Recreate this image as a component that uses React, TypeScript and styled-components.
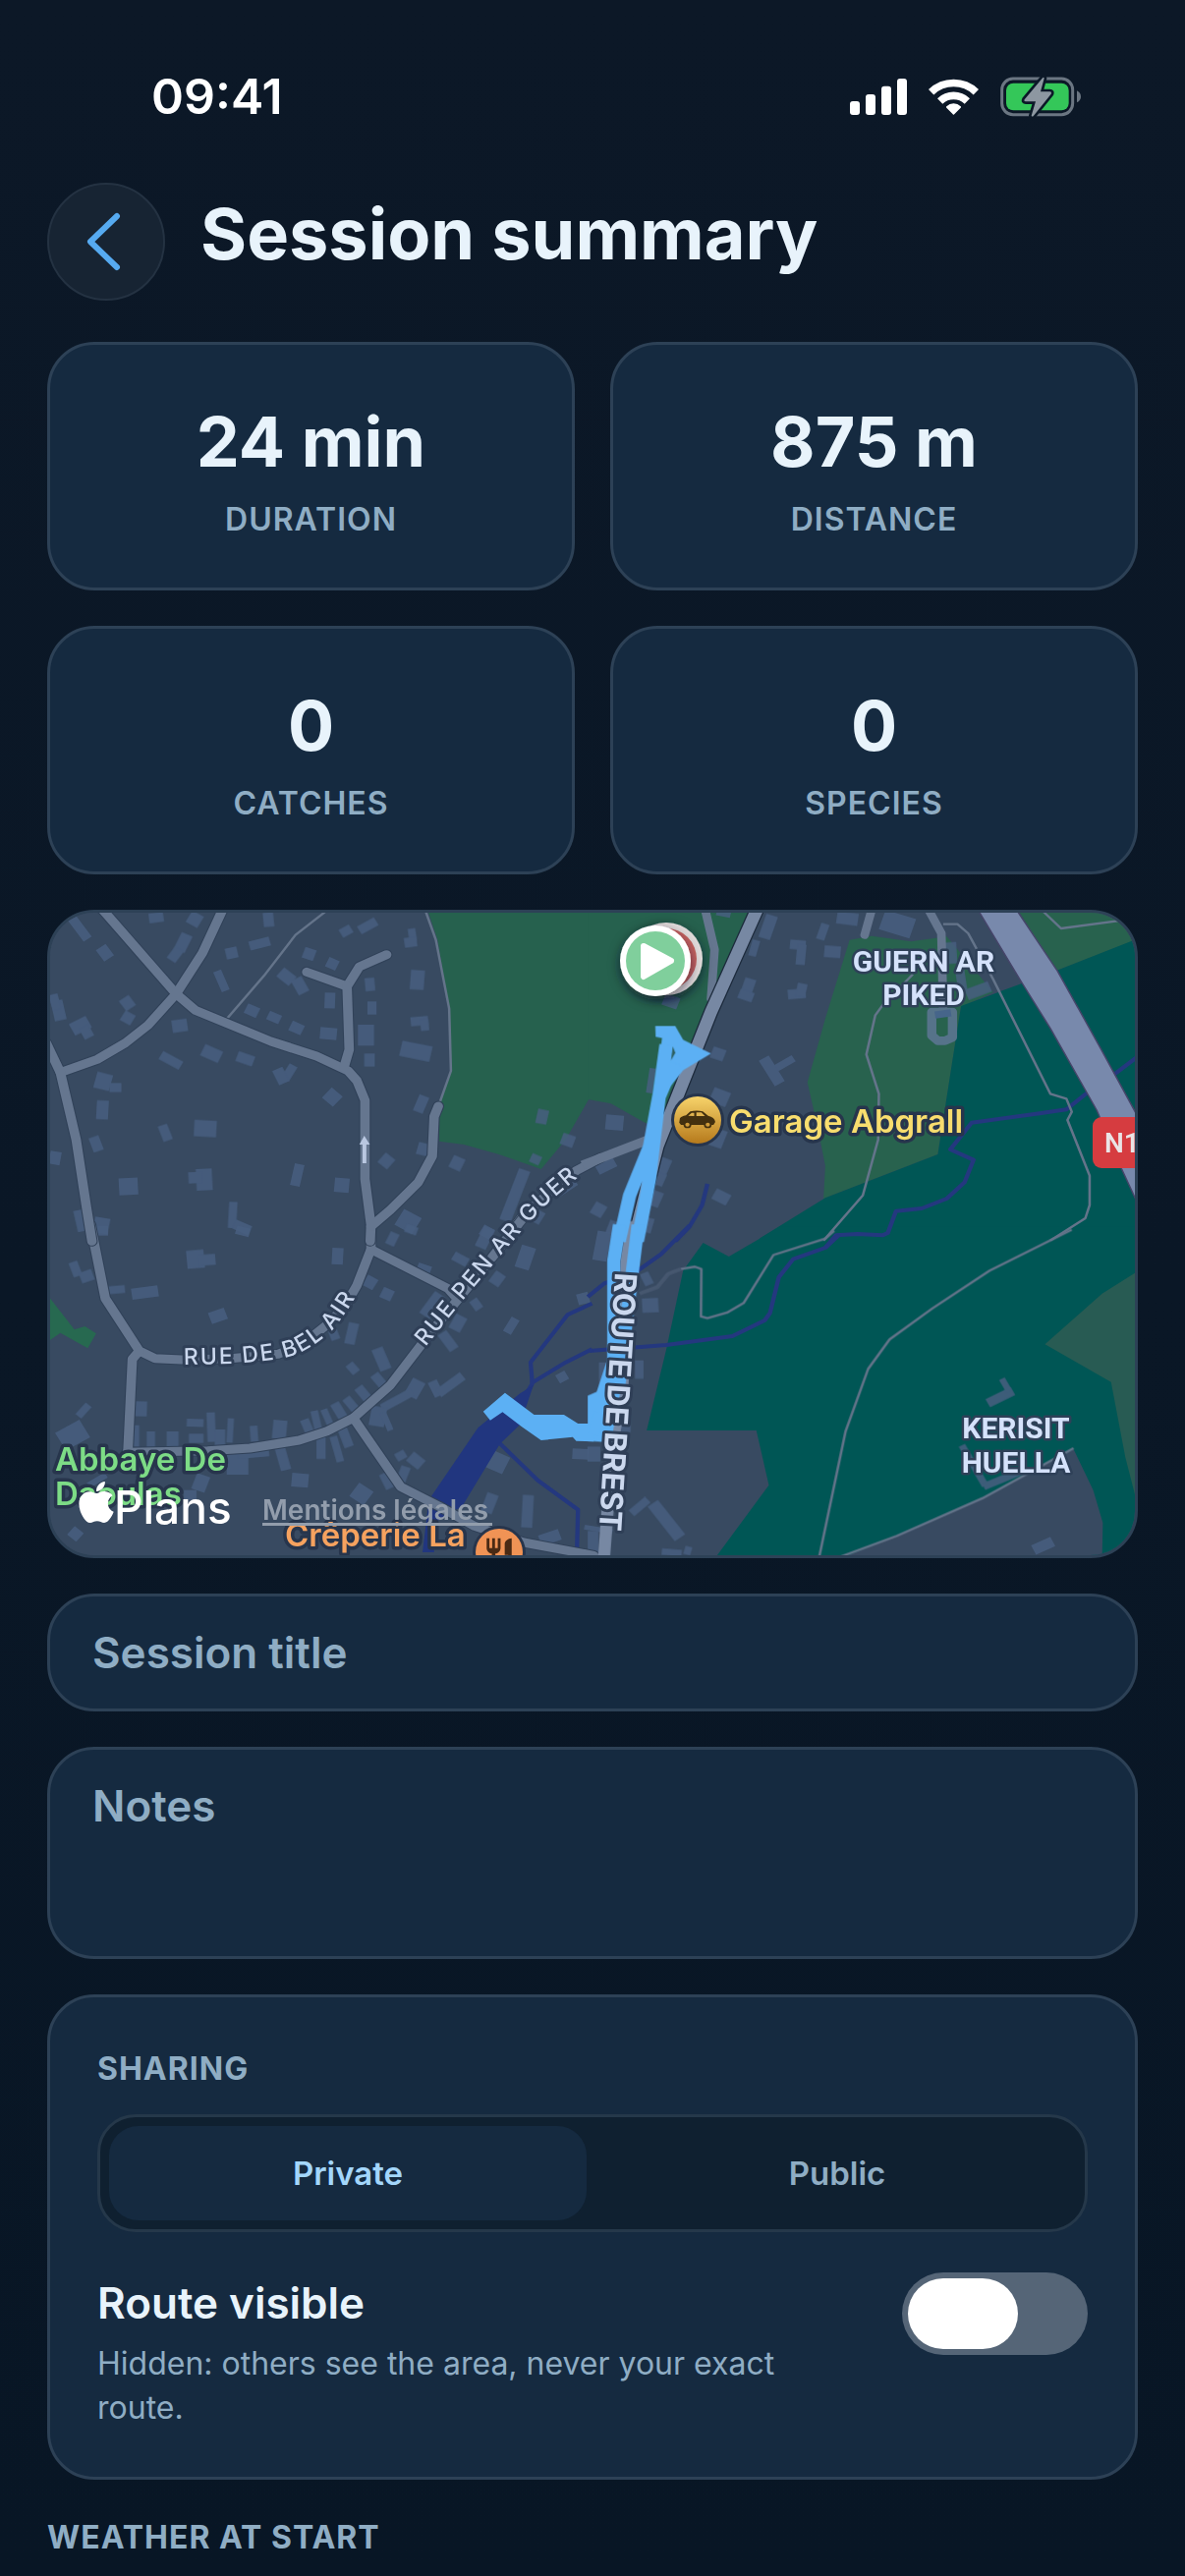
import React, { useState } from "react";
import styled, { createGlobalStyle } from "styled-components";
import { FaApple } from "react-icons/fa";
import { MdRestaurant } from "react-icons/md";

const GlobalStyle = createGlobalStyle`
  *, *::before, *::after { box-sizing: border-box; }
  body {
    margin: 0;
    background: #0a1726;
    color: #e8f3fb;
    font-family: Inter, "Noto Sans", sans-serif;
  }
  button, input, textarea { font: inherit; color: inherit; }
`;

const Screen = styled.main`
  min-height: 100vh;
  padding: 67px 48px 0;
  display: flex;
  flex-direction: column;
  background: linear-gradient(#0c1827, #081625);
`;

const StatusBar = styled.div`
  display: flex;
  align-items: center;
  justify-content: space-between;
  padding: 0 58px 0 106px;
  margin-bottom: 57px;
`;

const Clock = styled.time`
  font-size: 50px;
  line-height: 62px;
  font-weight: 600;
  color: #fff;
`;

const StatusIcons = styled.div`
  display: flex;
  align-items: center;
  gap: 22px;
`;

const Header = styled.header`
  display: flex;
  align-items: center;
  gap: 36px;
  margin-bottom: 42px;
`;

const BackButton = styled.button`
  width: 120px;
  height: 120px;
  flex: none;
  display: grid;
  place-items: center;
  padding: 0;
  border-radius: 50%;
  border: 2px solid #243242;
  background: #172433;
  color: #56aaf0;
`;

const Title = styled.h1`
  margin: 0;
  padding-bottom: 16px;
  font-size: 72px;
  line-height: 98px;
  font-weight: 700;
`;

const Content = styled.div`
  display: flex;
  flex-direction: column;
  gap: 36px;
`;

const Stats = styled.dl`
  margin: 0;
  display: grid;
  grid-template-columns: 1fr 1fr;
  gap: 36px;
`;

const Panel = styled.div`
  border: 3px solid #2d4156;
  border-radius: 48px;
  background: #152a40;
`;

const StatCard = styled(Panel)`
  display: flex;
  flex-direction: column-reverse;
  align-items: center;
  gap: 7px;
  padding: 50px 24px 47px;
`;

const StatValue = styled.dd`
  margin: 0;
  font-size: 70px;
  line-height: 98px;
  font-weight: 700;
`;

const StatLabel = styled.dt`
  font-size: 32px;
  line-height: 45px;
  font-weight: 600;
  letter-spacing: 1px;
  text-transform: uppercase;
  color: #8fadc4;
`;

const MapCard = styled(Panel)`
  overflow: hidden;
  background: #384a61;
  > svg { display: block; }
`;

const MapSvg = styled.svg`
  width: 100%;
  height: auto;
  font-family: Inter, sans-serif;
`;

const Poi = styled.text<{ $color: string }>`
  font-size: 33px;
  font-weight: 600;
  fill: ${(p) => p.$color};
  stroke: #27354c;
  stroke-width: 7px;
  stroke-linejoin: round;
  paint-order: stroke;
`;

const Place = styled.text`
  font-family: Roboto, sans-serif;
  font-size: 30px;
  font-weight: 700;
  text-anchor: middle;
  fill: #d5e2fb;
  stroke: #2e4058;
  stroke-width: 5px;
  stroke-linejoin: round;
  paint-order: stroke;
`;

const Street = styled.text<{ $major?: boolean }>`
  font-size: ${(p) => (p.$major ? 31 : 23)}px;
  font-weight: ${(p) => (p.$major ? 700 : 500)};
  letter-spacing: ${(p) => (p.$major ? 0 : 2)}px;
  fill: #cbd8ee;
  stroke: #2f3f57;
  stroke-width: 6px;
  stroke-linejoin: round;
  paint-order: stroke;
`;

const Brand = styled.text`
  font-size: 46px;
  font-weight: 500;
  fill: #fff;
`;

const Legal = styled.text`
  font-size: 28px;
  font-weight: 600;
  fill: #929dac;
`;

const Field = styled.input`
  width: 100%;
  height: 120px;
  padding: 0 43px;
  border: 3px solid #2d4156;
  border-radius: 48px;
  background: #152a40;
  font-size: 44px;
  line-height: 54px;
  font-weight: 600;
  outline: none;
  &::placeholder { color: #8fadc4; opacity: 1; }
`;

const Area = styled(Field)`
  display: block;
  height: 216px;
  padding: 30px 43px;
  resize: none;
`;

const Sharing = styled(Panel).attrs({ as: "section" })`
  padding: 50px 48px 48px;
`;

const SectionTitle = styled.h2`
  margin: 0;
  font-size: 32px;
  line-height: 45px;
  font-weight: 700;
  letter-spacing: 1px;
  text-transform: uppercase;
  color: #8fadc4;
`;

const Segmented = styled.div`
  display: grid;
  grid-template-columns: 1fr 1fr;
  gap: 12px;
  margin: 24px 0 36px;
  padding: 9px;
  border: 3px solid #25384a;
  border-radius: 39px;
  background: #0f2030;
`;

const Segment = styled.button<{ $active: boolean }>`
  height: 96px;
  border: 0;
  border-radius: 30px;
  background: ${(p) => (p.$active ? "#152a40" : "transparent")};
  color: ${(p) => (p.$active ? "#a3d6fb" : "#8fadc4")};
  font-size: 33px;
  font-weight: 600;
`;

const RouteRow = styled.div`
  display: flex;
  align-items: flex-start;
  gap: 36px;
`;

const RouteText = styled.div`
  flex: 1;
  min-width: 0;
  padding-top: 6px;
`;

const RouteLabel = styled.label`
  display: block;
  margin-bottom: 8px;
  font-size: 44px;
  line-height: 61px;
  font-weight: 600;
`;

const RouteHint = styled.p`
  margin: 0;
  max-width: 740px;
  font-size: 32px;
  line-height: 45px;
  color: #8fadc4;
`;

const Switch = styled.input`
  appearance: none;
  flex: none;
  width: 189px;
  height: 84px;
  margin: 5px 0 0;
  padding: 6px;
  border-radius: 42px;
  background: #556577;
  &::before {
    content: "";
    display: block;
    width: 112px;
    height: 72px;
    border-radius: 36px;
    background: #fff;
  }
  &:checked { background: #56aaf0; }
  &:checked::before { margin-left: auto; }
`;

const NW = "translate(-8 -6) scale(.35714 .33333)";
const NE = "translate(552 -6) scale(.36352 .33333)";
const SW = "translate(-8 324) scale(.35714 .33333)";
const SE = "translate(552 324) scale(.36352 .33333)";

/* Buildings: centre x, centre y, width, height, rotation. */
type B = [number, number, number, number, number];
const nwBuildings: B[] = [
  [115, 75, 28, 80, -35], [333, 42, 42, 30, -8], [443, 47, 38, 40, 30], [653, 48, 30, 44, -5],
  [187, 149, 34, 42, -35], [410, 118, 34, 55, 25], [387, 155, 30, 42, 35], [548, 150, 34, 34, -12],
  [628, 121, 60, 28, -15], [874, 83, 28, 34, 60], [936, 67, 56, 28, -30], [1063, 95, 22, 40, -8],
  [1058, 117, 36, 30, -8], [769, 153, 34, 34, 20], [835, 183, 32, 32, 25], [1077, 232, 40, 60, 4],
  [942, 246, 28, 40, -5], [948, 318, 26, 40, 0], [828, 295, 30, 48, 2], [704, 222, 36, 46, -50],
  [743, 250, 34, 50, -28], [519, 235, 24, 66, -22], [55, 325, 34, 62, -12], [45, 300, 26, 50, -15],
  [251, 303, 34, 38, -35], [252, 348, 34, 34, 30], [117, 372, 54, 40, -28], [135, 392, 30, 36, -28],
  [400, 372, 44, 38, -8], [606, 326, 38, 32, 25], [669, 347, 38, 28, 25], [733, 379, 38, 32, 25],
  [824, 396, 48, 36, 5], [931, 401, 46, 64, 0], [941, 477, 30, 40, 0], [1083, 358, 50, 28, -5],
  [1098, 370, 24, 34, -5], [1073, 450, 88, 48, 12], [375, 478, 66, 28, 30], [491, 457, 56, 38, 25],
  [587, 473, 50, 32, 20], [712, 515, 26, 50, 30], [688, 526, 32, 48, -25], [835, 590, 42, 42, 42],
  [182, 542, 46, 50, 15], [217, 561, 34, 28, 0], [180, 629, 34, 58, 3], [473, 686, 64, 50, 3],
  [359, 699, 28, 50, -20], [162, 733, 30, 46, -20], [45, 776, 32, 40, 10], [254, 863, 54, 52, -3],
  [470, 842, 46, 66, -3], [445, 836, 40, 34, -3], [735, 828, 28, 68, 12], [862, 859, 42, 44, 5],
  [989, 785, 36, 38, 40], [1088, 611, 30, 52, 22], [1094, 749, 34, 38, 15], [1190, 792, 36, 40, 25],
  [551, 950, 24, 80, 3], [578, 988, 50, 30, 25], [116, 968, 26, 66, -12], [177, 982, 44, 48, 10],
  [1051, 970, 58, 56, 30], [1433, 650, 32, 44, 12], [1506, 722, 38, 36, 20], [1414, 780, 30, 28, 25],
  [1355, 890, 34, 165, 20], [1420, 955, 30, 40, 30], [1502, 868, 66, 22, -35], [1275, 1002, 34, 34, 30],
];
const neBuildings: B[] = [
  [500, 70, 34, 74, 18], [461, 135, 22, 50, 15], [653, 85, 24, 50, 18], [722, 45, 60, 38, 8],
  [583, 125, 44, 30, 5], [592, 155, 26, 62, 5], [680, 146, 46, 36, 5], [862, 62, 90, 62, 18],
  [445, 250, 32, 45, 18], [438, 280, 42, 30, 20], [580, 275, 50, 30, -5], [593, 263, 28, 40, 12],
  [228, 298, 44, 36, 20], [360, 458, 38, 36, 20], [545, 488, 62, 22, -32], [510, 510, 32, 90, -30],
  [365, 590, 50, 46, 22], [70, 668, 50, 46, 5], [358, 715, 42, 56, 20], [205, 800, 38, 50, 22],
  [195, 840, 32, 40, 22], [183, 900, 36, 48, 22], [369, 895, 46, 36, 28], [160, 980, 34, 46, 15],
  [45, 798, 56, 36, -28], [25, 934, 36, 40, 30], [172, 540, 18, 76, 8], [1010, 150, 36, 66, -3],
  [1040, 230, 26, 70, -8], [1088, 265, 70, 34, -22], [375, 30, 40, 18, 12], [70, 990, 40, 40, 20],
];
const swBuildings: B[] = [
  [445, 95, 50, 56, -5], [478, 97, 48, 34, -5], [178, 8, 36, 30, 0], [580, 10, 40, 26, 15],
  [103, 125, 26, 46, -20], [135, 147, 38, 34, -20], [220, 188, 48, 24, -5], [301, 197, 76, 34, -8],
  [850, 86, 32, 50, 3], [1006, 33, 28, 40, 25], [943, 166, 34, 36, 30], [991, 202, 34, 34, 25],
  [509, 268, 48, 36, -20], [890, 322, 30, 66, 12], [840, 326, 26, 32, -20], [1060, 5, 36, 25, 20],
  [1200, 95, 46, 28, 30], [1305, 155, 34, 40, 35], [1245, 233, 26, 34, -35], [1270, 30, 34, 66, 25],
  [1385, 90, 42, 70, 18], [1193, 290, 36, 48, 28], [1165, 345, 30, 62, -35], [1120, 235, 36, 80, 35],
  [1345, 298, 26, 50, 30], [1095, 128, 40, 34, 20], [975, 400, 34, 70, -22], [893, 428, 26, 34, -40],
  [968, 465, 28, 46, -38], [925, 507, 28, 54, -38], [890, 540, 26, 54, -38], [855, 560, 28, 58, -30],
  [1070, 490, 40, 56, 28], [1020, 525, 100, 26, -30], [965, 575, 44, 60, 10], [990, 590, 18, 60, -22],
  [1490, 455, 30, 28, -30], [1130, 490, 28, 50, -25], [1172, 478, 88, 28, -38], [290, 552, 34, 46, 2],
  [126, 557, 22, 46, 40], [95, 632, 80, 62, -30], [444, 595, 48, 24, 2], [490, 608, 24, 90, -2],
  [544, 618, 18, 74, 3], [447, 642, 42, 28, 0], [380, 644, 34, 46, 0], [318, 645, 24, 48, 0],
  [272, 635, 26, 66, 0], [515, 640, 30, 50, 0], [612, 628, 22, 48, -4], [685, 615, 40, 56, 5],
  [765, 610, 26, 54, -22], [790, 590, 22, 66, -12], [822, 582, 20, 62, -22], [803, 665, 26, 80, 0],
  [848, 675, 22, 80, -15], [873, 640, 28, 60, -20], [565, 720, 62, 66, 0], [610, 690, 90, 22, -5],
  [693, 700, 30, 80, -15], [743, 770, 48, 42, 5], [460, 778, 40, 50, 20], [918, 812, 50, 50, 35],
  [1073, 710, 36, 44, -50], [1030, 695, 30, 26, -30], [1037, 752, 28, 50, 20], [990, 772, 26, 50, -25],
  [1306, 715, 54, 56, 25], [1391, 865, 32, 100, 3], [1283, 840, 34, 60, 20], [103, 934, 34, 34, 40],
  [1455, 945, 60, 34, -20], [1542, 690, 46, 32, 3], [430, 815, 36, 30, 0], [1550, 215, 34, 34, -15],
  [165, 770, 60, 18, -32],
];
const seBuildings: B[] = [
  [35, 55, 40, 90, 10], [160, 155, 26, 40, -25], [170, 236, 46, 44, -3], [139, 432, 24, 56, 0],
  [36, 455, 20, 90, 0], [12, 690, 36, 46, 0], [140, 850, 24, 62, 48], [215, 893, 36, 130, -36],
  [230, 990, 56, 20, 5], [275, 985, 20, 26, 15], [1150, 516, 80, 28, -28], [1165, 480, 18, 46, -28],
  [1270, 970, 60, 32, -26], [1075, 725, 20, 140, -28], [1158, 765, 120, 22, -24], [100, 595, 30, 56, 0],
  [10, 960, 30, 70, 0], [25, 920, 80, 15, 10],
];

const Buildings = ({ items }: { items: B[] }) => (
  <g fill="#485f80" opacity=".85">
    {items.map(([x, y, w, h, r], i) => (
      <rect key={i} x={x - w / 2} y={y - h / 2} width={w} height={h} transform={`rotate(${r} ${x} ${y})`} />
    ))}
  </g>
);

const Roads = ({ paths, width = 27 }: { paths: string[]; width?: number }) => (
  <g fill="none" strokeLinecap="round" strokeLinejoin="round">
    {paths.map((d) => <path key={"c" + d} d={d} stroke="#304158" strokeWidth={width + 6} />)}
    {paths.map((d) => <path key={d} d={d} stroke="#65768f" strokeWidth={width} />)}
  </g>
);

const SessionMap = () => (
  <MapSvg viewBox="3 3 1104 654" role="img" aria-label="Session route map">
    <defs>
      <path id="bel-air" d="M139 463 L188 462 Q232 459 250 454 Q272 445 290 428 Q304 412 322 380" />
      <path id="pen-ar-guer" d="M385 445 L426 394 L481 329 L508 300 L565 251" />
      <path id="brest" d="M578 369 L560 658" />
      <linearGradient id="gold" x1="0" y1="0" x2="0" y2="1">
        <stop offset="0" stopColor="#f7d36a" />
        <stop offset="1" stopColor="#b67a1c" />
      </linearGradient>
      <filter id="shade" x="-40%" y="-40%" width="180%" height="180%">
        <feDropShadow dx="0" dy="4" stdDeviation="6" floodColor="#0a1726" floodOpacity=".6" />
      </filter>
    </defs>
    <rect width="1110" height="660" fill="#384a61" />

    {/* parks and woodland */}
    <g transform={NW}>
      <path fill="#26614e" d="M1104 10L1135 110L1168 320L1173 510L1140 610V725L1210 735L1310 765L1430 810L1500 720L1580 570V10Z" />
    </g>
    <g transform={NE}>
      <path fill="#26614e" d="M-5 10H460L335 320L230 590L200 690L150 665L60 610L-5 597Z" />
      <path fill="#28624e" d="M728 110L790 98L900 115L1000 100L1130 270L1040 315L975 765L655 900L660 800L640 690L610 545L660 350Z" />
      <path fill="#28624e" d="M1195 10H1545V104L1305 205Z" />
      <path fill="#005655" d="M1040 312L1205 245L1305 205L1545 102V1022H475L660 898L975 765L1020 450Z" />
    </g>
    <g transform={SE}>
      <path fill="#005655" d="M535 -5H1545V1010H350L502 785L467 618H160L215 370L262 130L318 45L390 87Z" />
      <path fill="#285b53" d="M1540 128L1435 200L1275 355L1460 470L1500 700L1540 870Z" />
      <path fill="#384a61" d="M700 1010L860 940L1100 825L1355 675L1410 800L1437 900L1435 1010Z" />
    </g>
    <g transform={SW}>
      <path fill="#276950" d="M20 200L100 310L130 300L162 322L138 367L60 320L20 350Z" />
    </g>

    <g transform={NW}><Buildings items={nwBuildings} /></g>
    <g transform={NE}><Buildings items={neBuildings} /></g>
    <g transform={SW}><Buildings items={swBuildings} /></g>
    <g transform={SE}><Buildings items={seBuildings} /></g>

    {/* water */}
    <g fill="none" stroke="#24387f" strokeWidth="12" strokeLinejoin="round">
      <path transform={NE} d="M1540 462L1470 520L1390 580L1335 628L1260 640L1070 668L1010 750L1075 782L1050 850L1000 900L930 930L858 938L835 1005L820 1012L750 1008L690 1012L660 1050" />
      <path transform={NE} d="M330 855L315 920L280 985L240 1030" />
      <path transform={SE} d="M700 20L660 60L570 95L530 150L505 260L490 282L400 330L215 357L0 375" />
      <path transform={SE} d="M280 -8L200 80L135 130L40 170L-5 210" />
      <path transform={SW} d="M1575 230L1505 265L1400 410L1405 475L1380 520M1575 370L1500 410L1400 475M1310 655L1420 770L1535 860L1532 985" />
      <path transform={SW} fill="#21367f" stroke="none" d="M1408 480L1370 600L1312 660L1205 850L1125 900V990H1092L1110 830L1250 610L1370 505Z" />
    </g>

    {/* footpaths */}
    <g fill="none" stroke="#64748a" strokeWidth="7" strokeLinejoin="round">
      <path transform={NW} d="M820 20L730 95L640 220L535 350M1100 20L1130 110L1168 320L1173 510L1140 610" />
      <path transform={NE} d="M1265 18L1320 75L1540 43M990 62H1030L1060 90L1130 230L1290 580L1335 595L1350 635L1338 660L1400 830V920L1388 960L1290 1028M905 215L820 310L800 340L775 460L810 580L808 720L765 890L655 1028" />
      <path transform={SE} d="M1350 5L1120 130L960 245L840 340L780 430L717 620L642 1010M685 8L660 32L515 82L432 228L385 258L330 275L312 270L313 125L295 118L255 125M700 1005L860 940L1100 825L1355 672" />
      <path transform={SE} stroke="#46576f" strokeWidth="12" d="M255 125L220 140L190 180L140 200" />
    </g>

    {/* streets */}
    <g transform={SW}>
      <Roads paths={[
        "M146 -10L188 215L285 375L330 398L405 402L545 398L680 385L750 355L820 295L870 240L905 175L945 65V-30",
        "M285 375L265 400L252 690",
        "M1380 -40L1290 90L1100 340L1000 480L895 580L820 620L740 648L600 672L480 680L250 685",
        "M895 580L1030 790L1140 850L1240 910L1380 960L1580 1000",
        "M945 65L1165 185L1190 215",
      ]} />
    </g>
    <g transform={NW}>
      <Roads paths={[
        "M170 5L390 275L445 325L660 420L790 465L880 510L905 540L928 600V840L945 980L943 1030",
        "M528 5L465 150L390 275L310 370L245 425L165 475L60 515",
        "M20 425L60 515L105 720L135 930L150 1030",
        "M762 208L877 252L912 192L990 155",
        "M877 252L883 445L868 500",
        "M1137 618L1125 650L1120 770L1080 850L1000 935L945 985",
        "M1600 775L1530 815L1400 930L1290 1080",
      ]} />
      <path d="M926 708L912 735H921V792H932V735H942Z" fill="#b9c7e0" />
    </g>
    <g transform={NE} fill="none" strokeLinejoin="round">
      <path d="M322 10L350 140L340 290L352 315" stroke="#65768f" strokeWidth="24" />
      <path d="M792 10L770 95" stroke="#65768f" strokeWidth="24" strokeLinecap="round" />
      <path d="M945 10L985 90L990 320" stroke="#65768f" strokeWidth="24" />
      <path d="M958 330L1016 330V408L995 418L975 418L958 402Z" stroke="#56738a" strokeWidth="26" />
      <rect x="967" y="325" width="45" height="22" fill="#46658a" transform="rotate(-8 990 336)" />
      <path d="M-20 798L165 720" stroke="#65768f" strokeWidth="28" />
      <path d="M480 -10L340 330L190 740L130 1000" stroke="#1c2a3c" strokeWidth="42" />
      <path d="M480 -10L340 330L190 740L130 1000" stroke="#7788a3" strokeWidth="35" />
      <path fill="#7889ac" stroke="#46456a" strokeWidth="4" d="M1080 5L1187 5L1310 205L1430 440L1545 670V940L1490 810L1420 630L1290 380L1210 240Z" />
    </g>
    <path transform={SE} d="M122 -20L104 100L92 480L65 650L40 1010" stroke="#7788a3" strokeWidth="34" fill="none" />

    {/* recorded route */}
    <g fill="none" stroke="#5cb0f4" strokeWidth="37" strokeLinejoin="round">
      <g transform={NE}>
        <path fill="#5cb0f4" stroke="none" d="M184 373H240L262 415L340 457L262 508L212 578L180 590L203 410L185 406Z" />
        <path fill="#2d5f60" stroke="none" d="M233 435L240 455L228 478Z" />
        <path d="M214 430L195 580L168 740L112 890L83 1030M236 485L195 590L168 840L134 1030" />
      </g>
      <g transform={SE}>
        <path d="M84 -10L68 100V420L50 490M136 -10L118 150L98 330L80 500" />
        <path fill="#5cb0f4" stroke="none" d="M-5 512L20 500L50 400H92L88 490L60 655L-5 650Z" />
      </g>
      <path transform={SW} fill="#5cb0f4" stroke="none" d="M1265 560L1327 503L1410 570H1495L1535 597H1580V652L1530 650L1520 638L1430 648L1375 607L1320 562L1285 587Z" />
      <path d="M556 534L562 512" strokeWidth="11" />
    </g>

    {/* street and place names */}
    <Street><textPath href="#bel-air">RUE DE BEL AIR</textPath></Street>
    <Street><textPath href="#pen-ar-guer">RUE PEN AR GUER</textPath></Street>
    <Street $major><textPath href="#brest">ROUTE DE BREST</textPath></Street>
    <Place x="892" y="63">GUERN AR</Place>
    <Place x="892" y="97">PIKED</Place>
    <Place x="986" y="538">KERISIT</Place>
    <Place x="986" y="573">HUELLA</Place>

    <circle cx="662" cy="214" r="27" fill="#27354c" />
    <circle cx="662" cy="214" r="24" fill="url(#gold)" />
    <g transform={NE} fill="#43300f">
      <path d="M251 668L253 655Q257 649 270 646L282 634Q300 629 317 634L332 647Q350 651 352 666L347 675H256Z" />
      <path d="M276 647L286 638H293V648ZM299 637H313L323 648H299Z" fill="#e0b350" />
      <circle cx="274" cy="674" r="11" />
      <circle cx="331" cy="674" r="11" />
      <circle cx="274" cy="674" r="6" fill="#cf9a38" />
      <circle cx="331" cy="674" r="6" fill="#cf9a38" />
    </g>
    <Poi x="694" y="227" $color="#f8dd6e">Garage Abgrall</Poi>
    <Poi x="8" y="571" $color="#7ddc86">Abbaye De</Poi>
    <Poi x="8" y="606" $color="#7ddc86">Daoulas</Poi>
    <Poi x="242" y="648" $color="#f6a25f">Crêperie La</Poi>
    <circle cx="460" cy="654" r="27" fill="#27354c" />
    <circle cx="460" cy="654" r="24" fill="#f09355" />
    <MdRestaurant x="443" y="637" size={34} color="#4a2a14" />

    <rect x="1064" y="211" width="70" height="52" rx="9" fill="#d63c40" />
    <text x="1076" y="247" fontFamily="Roboto" fontSize="28" fontWeight="600" fill="#eae4e6">N1</text>

    {/* finish and start markers */}
    <g filter="url(#shade)">
      <circle cx="630" cy="50" r="37" fill="#e0dada" />
      <circle cx="630" cy="50" r="31" fill="#c5625f" />
    </g>
    <g filter="url(#shade)">
      <circle cx="619" cy="52" r="36" fill="#fff" />
      <circle cx="619" cy="52" r="30" fill="#80cf9c" />
      <path d="M607 37L635 52L607 68Z" fill="#fff" stroke="#fff" strokeWidth="6" strokeLinejoin="round" />
    </g>

    <FaApple x="26" y="579" size={48} color="#fff" />
    <Brand x="68" y="625">Plans</Brand>
    <a href="#legal">
      <Legal x="219" y="621">Mentions légales</Legal>
      <rect x="219" y="624" width="234" height="3" fill="#929dac" />
    </a>
  </MapSvg>
);

const SignalIcon = () => (
  <svg width="58" height="37" viewBox="0 0 174 111" fill="#fff" aria-hidden="true">
    <rect y="69" width="30" height="42" rx="9" />
    <rect x="48" y="48" width="30" height="63" rx="9" />
    <rect x="96" y="23" width="30" height="88" rx="9" />
    <rect x="144" width="30" height="111" rx="9" />
  </svg>
);

const WifiIcon = () => (
  <svg width="51" height="37" viewBox="0 0 153 111" fill="none" stroke="#fff" aria-hidden="true">
    <path d="M8 41A99 99 0 0 1 145 41" strokeWidth="23" />
    <path d="M35 69A60 60 0 0 1 118 69" strokeWidth="23" />
    <path d="M76.500 107L57 87A28 28 0 0 1 96 87Z" fill="#fff" strokeWidth="6" strokeLinejoin="round" />
  </svg>
);

const BatteryIcon = () => (
  <svg width="82" height="41" viewBox="0 0 246 123" aria-hidden="true">
    <rect x="5" y="6" width="216" height="110" rx="34" fill="none" stroke="#6b7682" strokeWidth="9" />
    <path d="M234 43Q246 49 246 61T234 79Z" fill="#6b7682" />
    <rect x="18" y="20" width="191" height="83" rx="22" fill="#34c759" />
    <path
      d="M130 3L74 70Q71 76 78 76H108L95 119Q97 124 102 119L155 53Q158 46 151 46H123L134 5Q133 0 130 3Z"
      fill="#8d97a1" stroke="#0b1827" strokeWidth="16" strokeLinejoin="round" paintOrder="stroke"
    />
  </svg>
);

const stats = [
  { label: "Duration", value: "24 min" },
  { label: "Distance", value: "875 m" },
  { label: "Catches", value: "0" },
  { label: "Species", value: "0" },
];

export default function App() {
  const [visibility, setVisibility] = useState("Private");
  const [routeVisible, setRouteVisible] = useState(false);

  return (
    <>
      <GlobalStyle />
      <Screen>
        <StatusBar>
          <Clock>09:41</Clock>
          <StatusIcons>
            <SignalIcon />
            <WifiIcon />
            <BatteryIcon />
          </StatusIcons>
        </StatusBar>

        <Header>
          <BackButton type="button" aria-label="Back">
            <svg width="40" height="64" viewBox="0 0 40 64" fill="none" stroke="currentColor" strokeWidth="6" strokeLinecap="round" strokeLinejoin="round">
              <path d="M31 6L4 32L31 58" />
            </svg>
          </BackButton>
          <Title>Session summary</Title>
        </Header>

        <Content>
          <Stats>
            {stats.map((s) => (
              <StatCard key={s.label}>
                <StatLabel>{s.label}</StatLabel>
                <StatValue>{s.value}</StatValue>
              </StatCard>
            ))}
          </Stats>

          <MapCard>
            <SessionMap />
          </MapCard>

          <Field type="text" placeholder="Session title" aria-label="Session title" />
          <Area as="textarea" placeholder="Notes" aria-label="Notes" />

          <Sharing>
            <SectionTitle>Sharing</SectionTitle>
            <Segmented role="group" aria-label="Sharing">
              {["Private", "Public"].map((v) => (
                <Segment key={v} type="button" $active={v === visibility} aria-pressed={v === visibility} onClick={() => setVisibility(v)}>
                  {v}
                </Segment>
              ))}
            </Segmented>
            <RouteRow>
              <RouteText>
                <RouteLabel htmlFor="route-visible">Route visible</RouteLabel>
                <RouteHint>Hidden: others see the area, never your exact route.</RouteHint>
              </RouteText>
              <Switch id="route-visible" type="checkbox" role="switch" checked={routeVisible} onChange={(e) => setRouteVisible(e.target.checked)} />
            </RouteRow>
          </Sharing>

          <SectionTitle>Weather at start</SectionTitle>
        </Content>
      </Screen>
    </>
  );
}
